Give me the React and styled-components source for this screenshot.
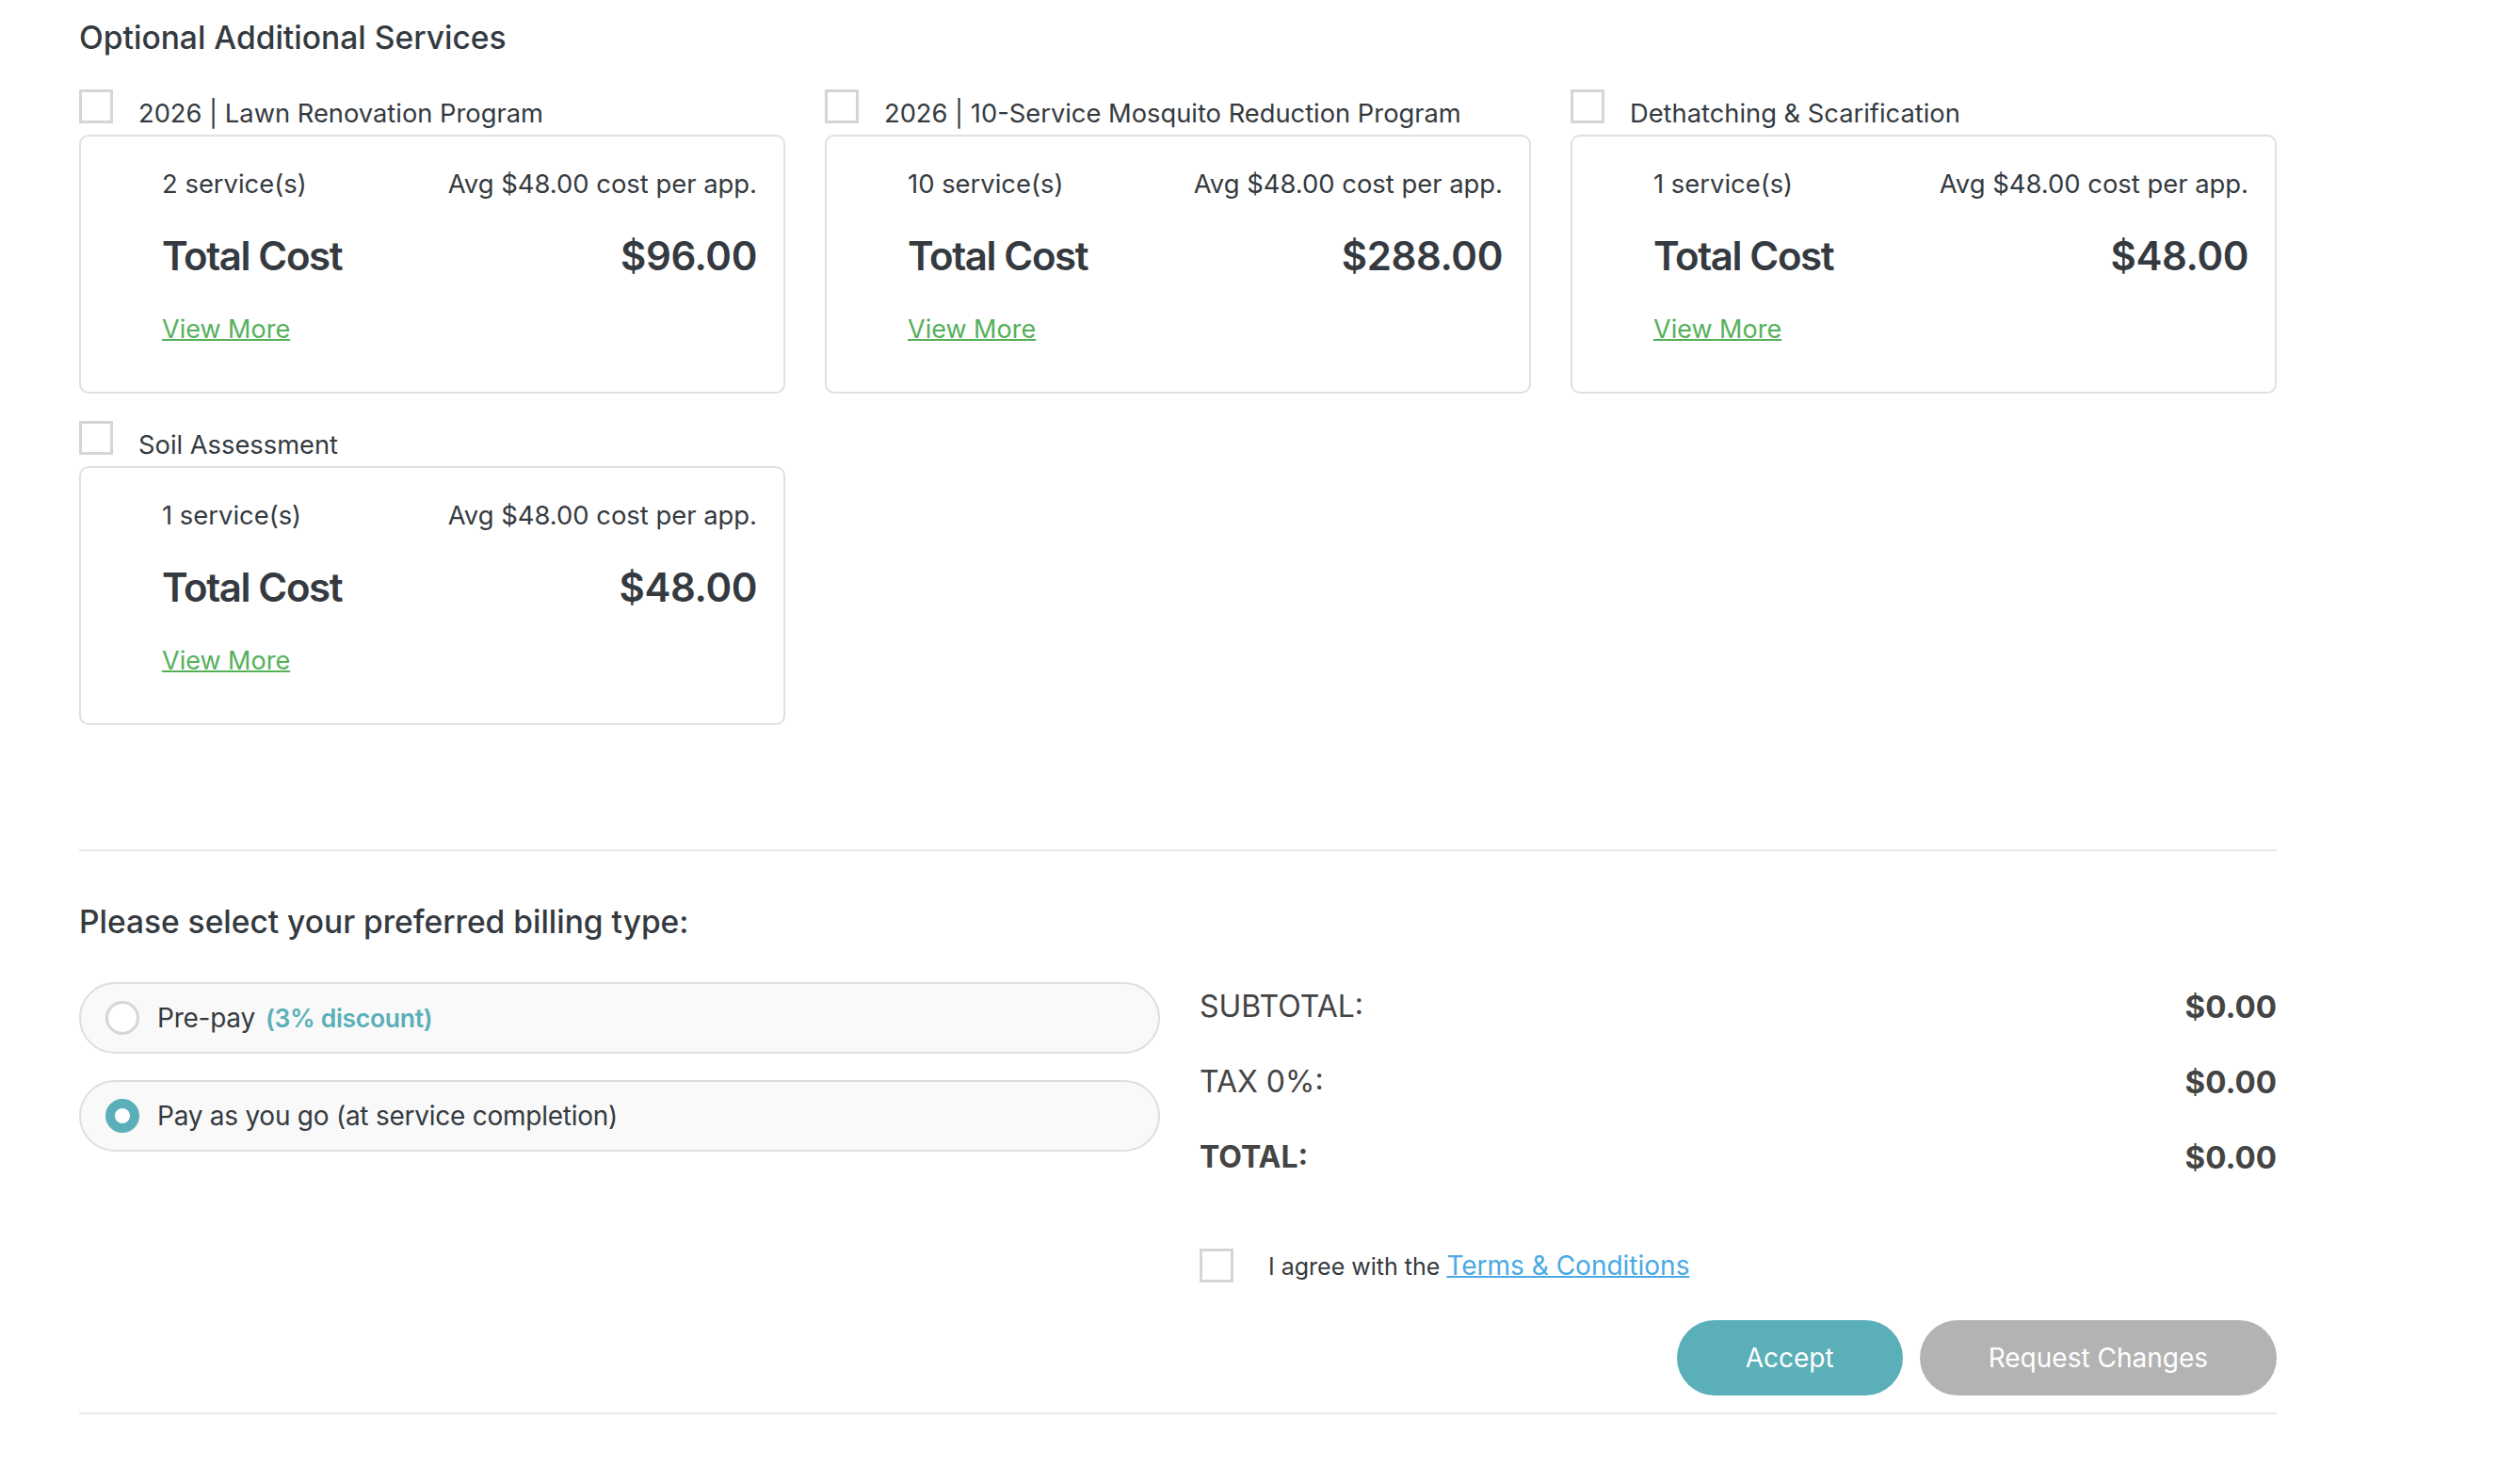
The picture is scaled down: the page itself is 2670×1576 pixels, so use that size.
import React from "react";
import styled, { createGlobalStyle } from "styled-components";

const services = [
  { id: 1, name: "2026 | Lawn Renovation Program", count: 2, total: "$96.00" },
  { id: 2, name: "2026 | 10-Service Mosquito Reduction Program", count: 10, total: "$288.00" },
  { id: 3, name: "Dethatching & Scarification", count: 1, total: "$48.00" },
  { id: 4, name: "Soil Assessment", count: 1, total: "$48.00" },
];

const totals = [
  { id: "sub", label: "SUBTOTAL:", value: "$0.00" },
  { id: "tax", label: "TAX 0%:", value: "$0.00" },
  { id: "total", label: "TOTAL:", value: "$0.00", strong: true },
];

const dark = "#343a40";
const teal = "#5aafb8";

function App() {
  const cards = services.map((s) => (
    <ServiceItem key={s.id}>
      <ItemHeader>
        <Box />
        <ItemName>{s.name}</ItemName>
      </ItemHeader>
      <Card>
        <TopRow>
          <span>{s.count} service(s)</span>
          <span>Avg $48.00 cost per app.</span>
        </TopRow>
        <TotalRow>
          <TotalLabel>Total Cost</TotalLabel>
          <span>{s.total}</span>
        </TotalRow>
        <ViewMore href="#">View More</ViewMore>
      </Card>
    </ServiceItem>
  ));

  return (
    <>
      <GlobalStyle />
      <Page>
        <Title>Optional Additional Services</Title>
        <ServicesGrid>{cards}</ServicesGrid>

        <Divider />

        <BillingTitle>Please select your preferred billing type:</BillingTitle>
        <BillingGrid>
          <PillList>
            <Pill>
              <Radio />
              <span>Pre-pay</span>
              <Discount>(3% discount)</Discount>
            </Pill>
            <Pill>
              <Radio $checked />
              <span>Pay as you go (at service completion)</span>
            </Pill>
          </PillList>

          <Summary>
            {totals.map((t) => (
              <SummaryRow key={t.id} $strong={t.strong}>
                <span>{t.label}</span>
                <Value>{t.value}</Value>
              </SummaryRow>
            ))}
            <AgreeRow>
              <Box />
              <AgreeText>
                I agree with the <TermsLink href="#">Terms &amp; Conditions</TermsLink>
              </AgreeText>
            </AgreeRow>
            <Actions>
              <ActionButton $bg={teal}>Accept</ActionButton>
              <ActionButton $bg="#b3b3b3">Request Changes</ActionButton>
            </Actions>
          </Summary>
        </BillingGrid>
        <Divider $top="18px" />
      </Page>
    </>
  );
}

const GlobalStyle = createGlobalStyle`
body {
  margin: 0;
  background: #fff;
  font-family: Inter, "Liberation Sans", sans-serif;
  color: ${dark};
}
`;

const Page = styled.div`
width: 2334px;
padding: 20px 0 60px 84px;
`;

const Title = styled.h2`
margin: 0;
font-size: 33.6px;
line-height: 40px;
font-weight: 500;
color: ${dark};
`;

const ServicesGrid = styled.div`
display: grid;
grid-template-columns: repeat(3, 750px);
column-gap: 42px;
row-gap: 29px;
margin-top: 35px;
`;

const ServiceItem = styled.div`
display: flex;
flex-direction: column;
`;

const ItemHeader = styled.div`
display: flex;
align-items: flex-start;
gap: 27px;
`;

const Box = styled.span`
display: block;
flex-shrink: 0;
width: 36px;
height: 36px;
box-sizing: border-box;
border: 3px solid #d5d5d5;
background: #fff;
`;

const ItemName = styled.span`
margin-top: 10px;
font-size: 27.3px;
line-height: 32px;
color: ${dark};
`;

const Card = styled.div`
margin-top: 6px;
height: 275px;
box-sizing: border-box;
border: 2px solid #e0e0e0;
border-radius: 10px;
padding: 34px 28px 0 86px;
display: flex;
flex-direction: column;
align-items: flex-start;
`;

const TopRow = styled.div`
align-self: stretch;
display: flex;
justify-content: space-between;
font-size: 27.4px;
line-height: 32px;
`;

const TotalRow = styled.div`
align-self: stretch;
display: flex;
justify-content: space-between;
margin-top: 36px;
font-size: 42px;
line-height: 50px;
font-weight: 600;
letter-spacing: -0.4px;
`;

const TotalLabel = styled.span`
letter-spacing: -1.4px;
`;

const ViewMore = styled.a`
margin-top: 37px;
font-size: 27px;
line-height: 32px;
color: #55b05a;
text-decoration: underline;
text-decoration-thickness: 2px;
`;

const Divider = styled.div`
height: 2px;
background: #e8e8e8;
margin-top: ${(p) => p.$top || "132px"};
`;

const BillingTitle = styled.h3`
margin: 55px 0 0;
font-size: 33.5px;
line-height: 40px;
font-weight: 500;
color: ${dark};
`;

const BillingGrid = styled.div`
display: grid;
grid-template-columns: 1148px 1fr;
column-gap: 42px;
margin-top: 44px;
`;

const PillList = styled.div`
display: flex;
flex-direction: column;
gap: 28px;
`;

const Pill = styled.label`
display: flex;
align-items: center;
height: 76px;
box-sizing: border-box;
padding-left: 26px;
border: 2px solid #dedede;
border-radius: 38px;
background: #f9f9f9;
font-size: 28px;
letter-spacing: -0.25px;
color: ${dark};
`;

const Radio = styled.span`
width: 36px;
height: 36px;
margin-right: 19px;
box-sizing: border-box;
border-radius: 50%;
background: #fff;
border: ${(p) => (p.$checked ? `10px solid ${teal}` : "3px solid #d6d6d6")};
`;

const Discount = styled.span`
margin-left: 11px;
color: ${teal};
font-size: 26.5px;
font-weight: 600;
letter-spacing: -0.3px;
`;

const Summary = styled.div`
display: flex;
flex-direction: column;
gap: 40px;
padding-top: 6px;
`;

const SummaryRow = styled.div`
display: flex;
justify-content: space-between;
font-size: 32px;
line-height: 40px;
color: #444;
font-weight: ${(p) => (p.$strong ? 700 : 400)};
`;

const Value = styled.span`
font-weight: 700;
font-size: 33px;
`;

const AgreeRow = styled.div`
display: flex;
align-items: center;
gap: 37px;
margin-top: 37px;
`;

const AgreeText = styled.span`
font-size: 25px;
color: ${dark};
`;

const TermsLink = styled.a`
font-size: 28px;
color: #4ba9e3;
text-decoration: underline;
text-decoration-thickness: 2px;
`;

const Actions = styled.div`
display: flex;
justify-content: flex-end;
gap: 18px;
`;

const ActionButton = styled.button`
height: 80px;
padding: 0 73px;
border: none;
border-radius: 40px;
background: ${(p) => p.$bg};
color: #fff;
font-family: Inter, "Liberation Sans", sans-serif;
font-size: 28px;
`;

export default App;
